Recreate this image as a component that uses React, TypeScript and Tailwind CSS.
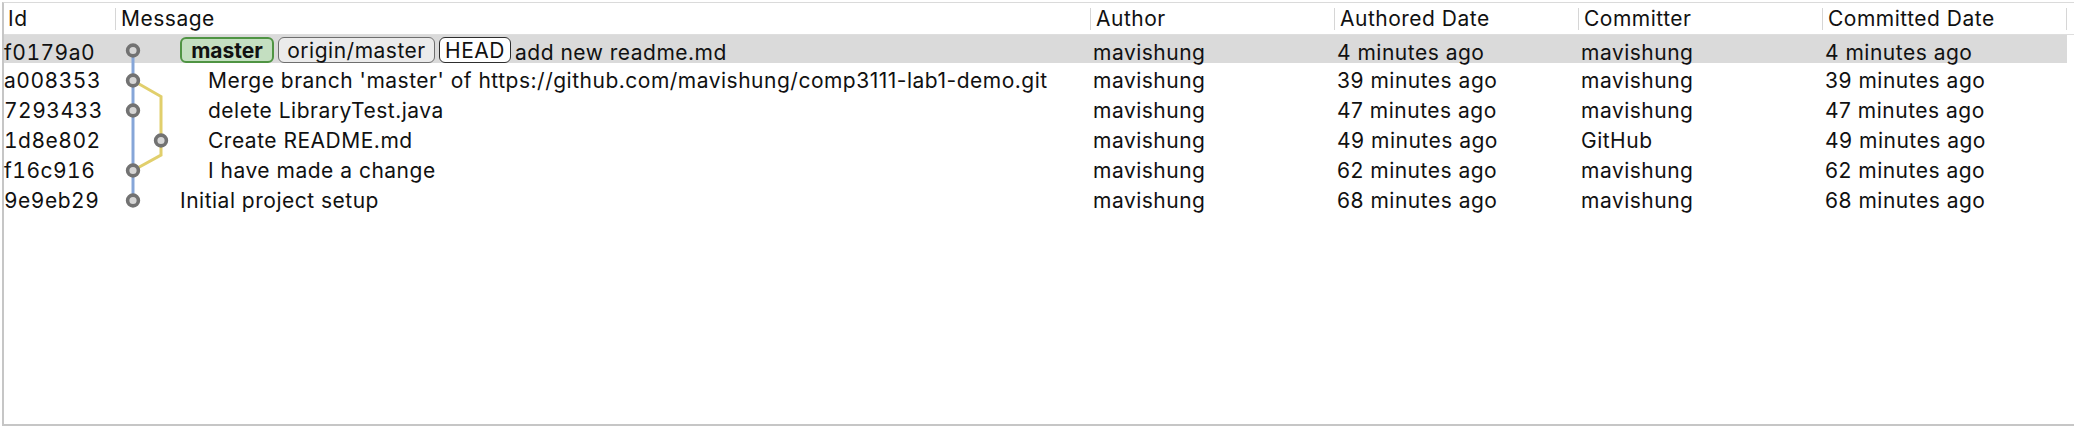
import React from "react";

type Commit = {
  id: string;
  lanes: number;
  message: string;
  author: string;
  authored: string;
  committer: string;
  committed: string;
  refs?: boolean;
};

const COMMITS: Commit[] = [
  { id: "f0179a0", lanes: 1, refs: true, message: "add new readme.md", author: "mavishung", authored: "4 minutes ago", committer: "mavishung", committed: "4 minutes ago" },
  { id: "a008353", lanes: 2, message: "Merge branch 'master' of https://github.com/mavishung/comp3111-lab1-demo.git", author: "mavishung", authored: "39 minutes ago", committer: "mavishung", committed: "39 minutes ago" },
  { id: "7293433", lanes: 2, message: "delete LibraryTest.java", author: "mavishung", authored: "47 minutes ago", committer: "mavishung", committed: "47 minutes ago" },
  { id: "1d8e802", lanes: 2, message: "Create README.md", author: "mavishung", authored: "49 minutes ago", committer: "GitHub", committed: "49 minutes ago" },
  { id: "f16c916", lanes: 2, message: "I have made a change", author: "mavishung", authored: "62 minutes ago", committer: "mavishung", committed: "62 minutes ago" },
  { id: "9e9eb29", lanes: 1, message: "Initial project setup", author: "mavishung", authored: "68 minutes ago", committer: "mavishung", committed: "68 minutes ago" },
];

const COLS = "grid grid-cols-[111px_975px_244px_244px_244px_245px]";

// graph nodes, in svg coords (svg sits at the Message column, top of rows)
const NODES: [number, number][] = [
  [18, 15.5],
  [18, 45.5],
  [18, 75.5],
  [46, 105.5],
  [18, 135.5],
  [18, 165.5],
];

function Graph() {
  return (
    <svg className="pointer-events-none absolute left-[111px] top-0" width="80" height="180" viewBox="0 0 80 180">
      <line x1="18" y1="15.5" x2="18" y2="165.5" stroke="#86a6d8" strokeWidth="3" />
      <polyline
        points="18,45.5 46,61.5 46,120 18,135.5"
        fill="none"
        stroke="#e1cf6c"
        strokeWidth="3"
        strokeLinejoin="miter"
      />
      {NODES.map(([x, y], i) => (
        <circle key={i} cx={x} cy={y} r="5.4" fill="#d6d6d6" stroke="#727272" strokeWidth="3.6" />
      ))}
    </svg>
  );
}

function HeaderCell({ label, first }: { label: string; first?: boolean }) {
  if (first) {
    return <div className="flex items-center pl-[4px]">{label}</div>;
  }
  return (
    <div className="flex items-center">
      <div className="h-[22px] w-px bg-[#d6d6d6]" />
      <span className="ml-[5px]">{label}</span>
    </div>
  );
}

function Refs() {
  return (
    <div className="mb-[4px] mr-[4px] flex items-center gap-[4px]">
      <span className="flex h-[26px] w-[94px] items-center justify-center rounded-[6px] border-2 border-[#4f9443] bg-[#c4dfc1] font-bold tracking-normal">
        master
      </span>
      <span className="flex h-[26px] w-[157px] items-center justify-center rounded-[6px] border-[1.5px] border-[#6e6e6e] bg-[#ebebeb]">
        origin/master
      </span>
      <span className="flex h-[26px] w-[72px] items-center justify-center rounded-[6px] border-[1.5px] border-[#2e2e2e] bg-white">
        HEAD
      </span>
    </div>
  );
}

export default function App() {
  return (
    <div className="h-[428px] w-[2074px] bg-white pl-[2px] pt-[2px] pb-[2px] font-['Inter','Noto_Sans',sans-serif] text-[21px] tracking-[0.5px] text-[#111]">
      <div className="h-full border-b-2 border-l-2 border-t border-[#c6c6c6] border-t-[#dadada]">
        <div className={`${COLS} h-[32px] border-b border-[#dedede] pb-[2px]`}>
          <HeaderCell label="Id" first />
          <HeaderCell label="Message" />
          <HeaderCell label="Author" />
          <HeaderCell label="Authored Date" />
          <HeaderCell label="Committer" />
          <div className="flex items-center justify-between">
            <div className="flex items-center">
              <div className="h-[22px] w-px bg-[#d6d6d6]" />
              <span className="ml-[5px]">Committed Date</span>
            </div>
            <div className="h-[22px] w-px bg-[#d6d6d6]" />
          </div>
        </div>

        <div className="relative w-[2063px]">
          {COMMITS.map((c, i) => (
            <div
              key={c.id}
              className={`${COLS} h-[30px] border-b-2 border-transparent bg-clip-padding leading-none ${
                i === 0 ? "bg-[#dadada]" : ""
              }`}
            >
              <div className="flex items-center pt-[2px] tabular-nums">{c.id}</div>
              <div
                className={`flex items-center whitespace-nowrap pt-[2px] ${
                  c.lanes === 1 ? "pl-[65px]" : "pl-[93px]"
                }`}
              >
                {c.refs && <Refs />}
                {c.message}
              </div>
              <div className="flex items-center pl-[3px] pt-[2px]">{c.author}</div>
              <div className="flex items-center pl-[3px] pt-[2px]">{c.authored}</div>
              <div className="flex items-center pl-[3px] pt-[2px]">{c.committer}</div>
              <div className="flex items-center pl-[3px] pt-[2px]">{c.committed}</div>
            </div>
          ))}
          <Graph />
        </div>
      </div>
    </div>
  );
}
